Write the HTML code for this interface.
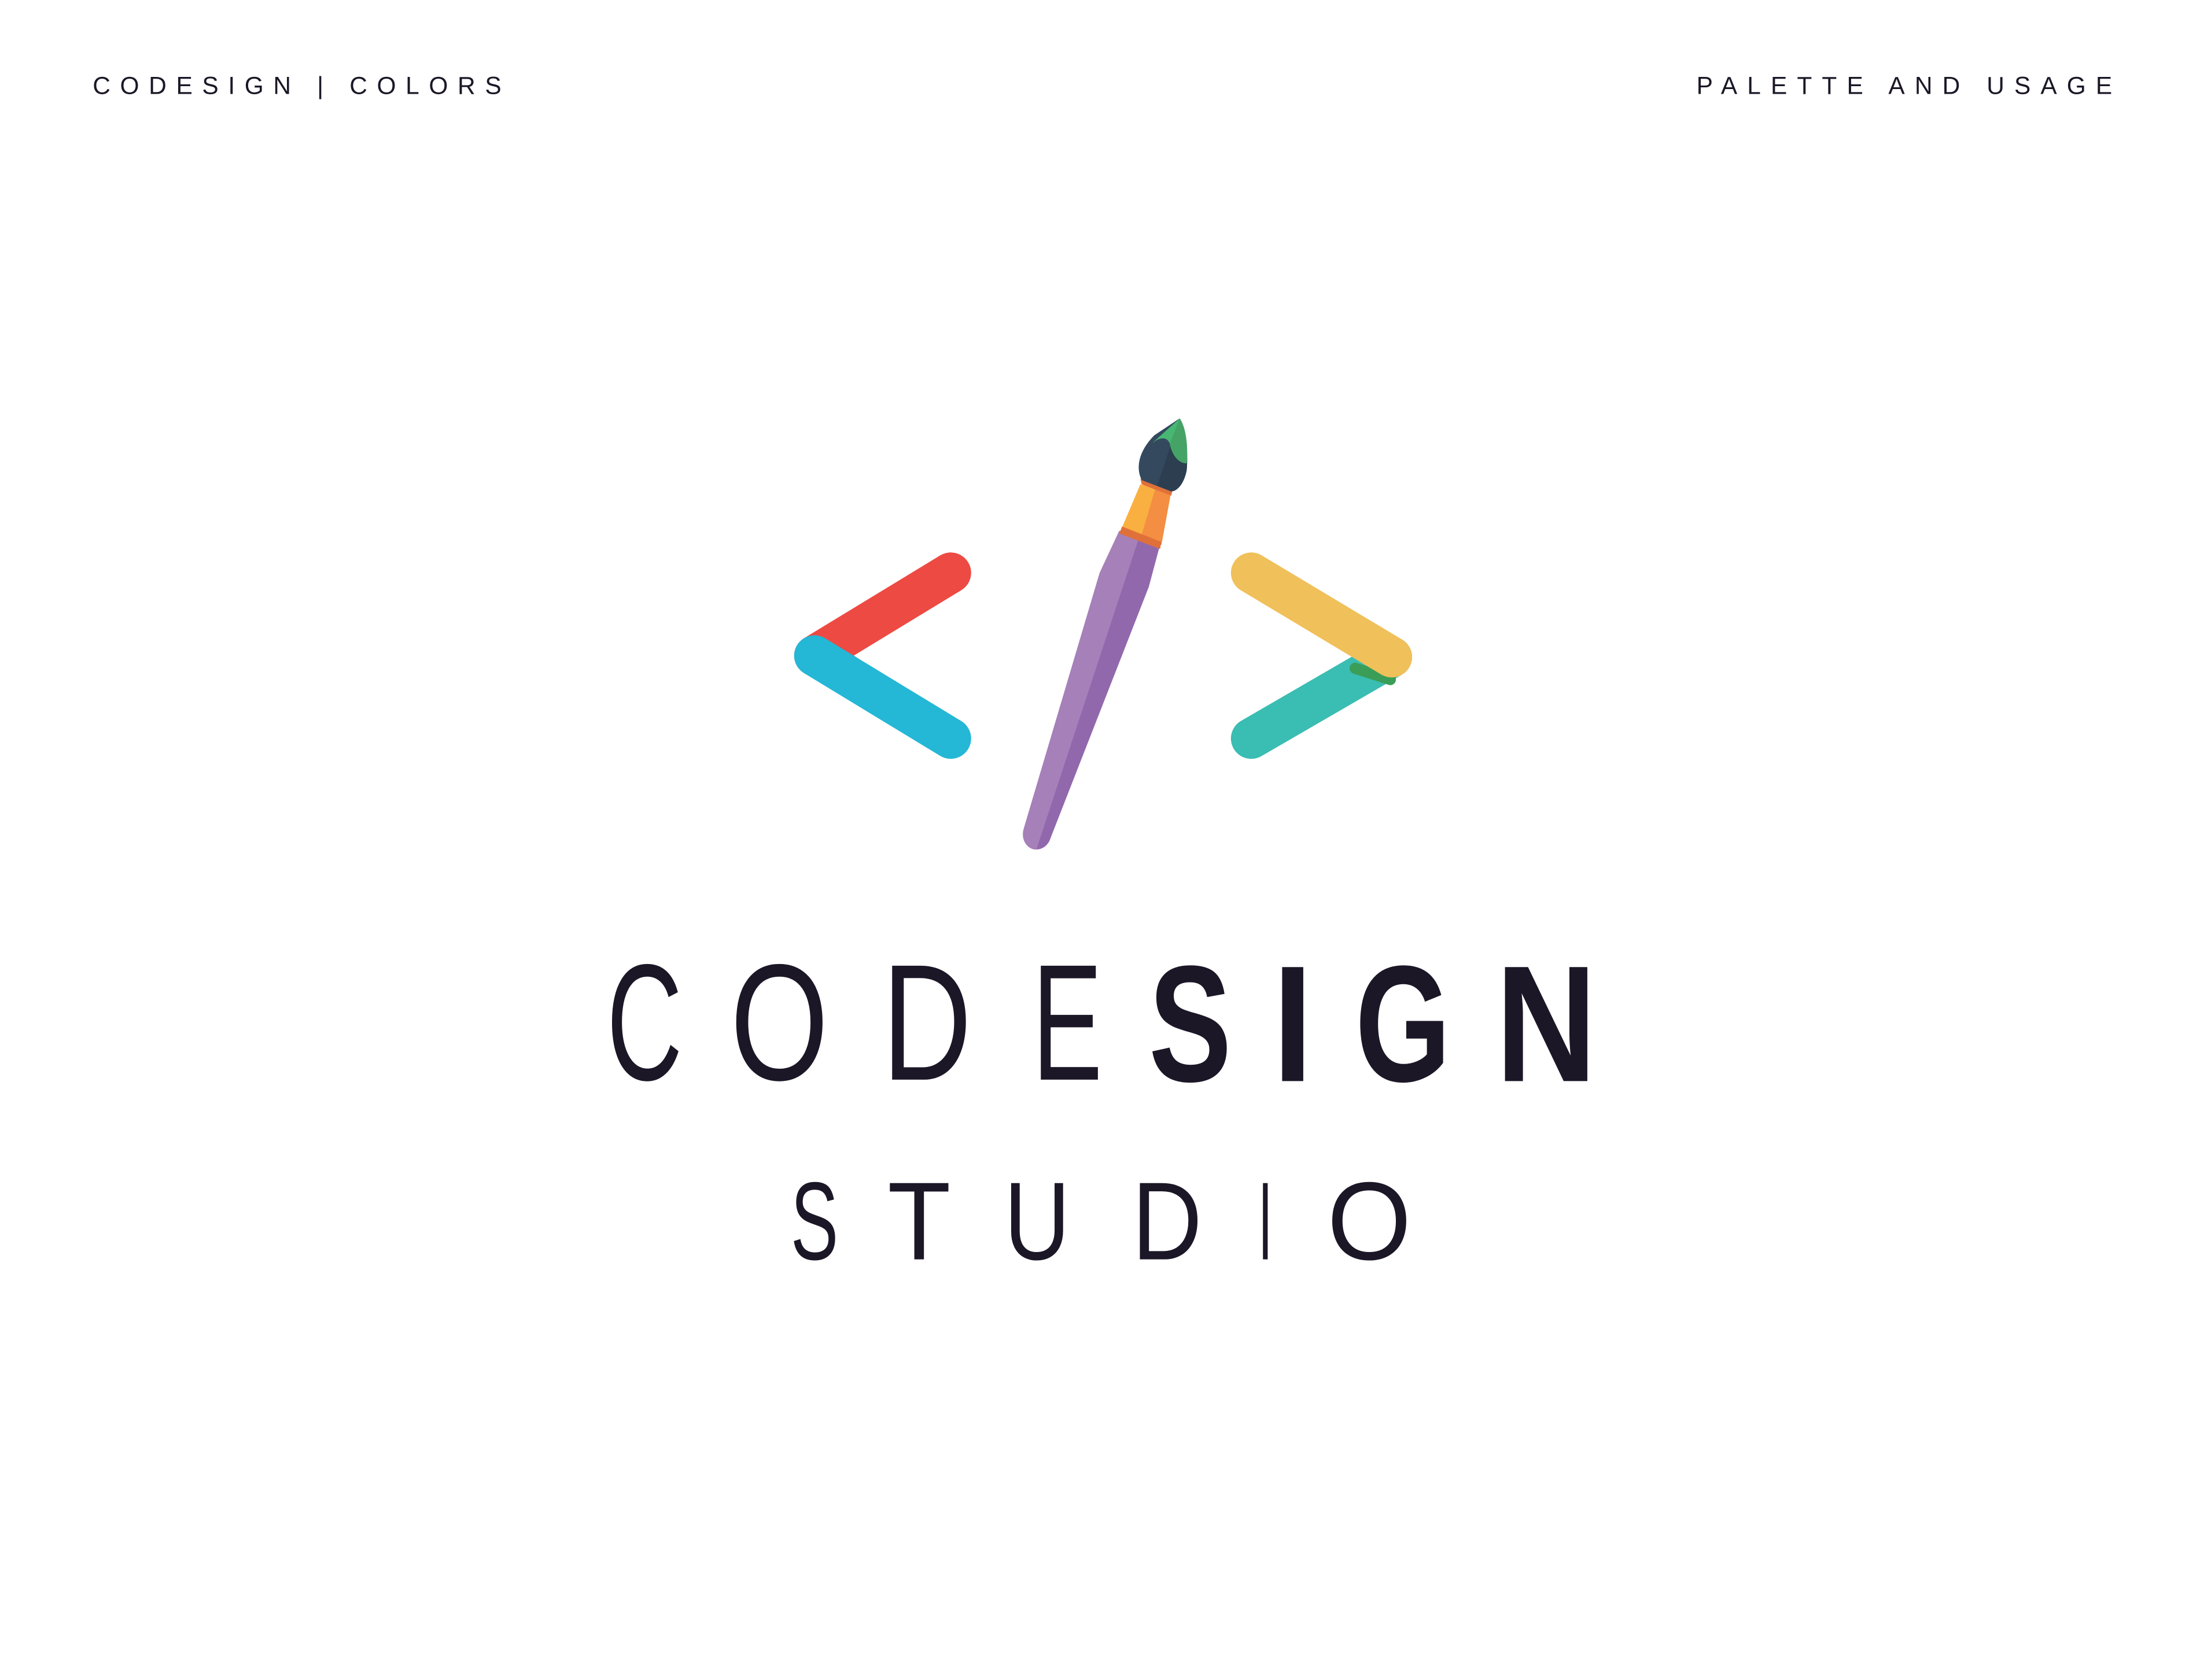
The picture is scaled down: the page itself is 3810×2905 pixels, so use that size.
<!DOCTYPE html>
<html><head><meta charset="utf-8"><style>
html,body{margin:0;padding:0;background:#fff;}
svg{display:block;}
</style></head><body>
<svg width="3810" height="2905" viewBox="0 0 1569.4 1196.6" preserveAspectRatio="none" xmlns="http://www.w3.org/2000/svg">
<rect width="1569.4" height="1196.6" fill="#fff"/>
<g fill="#1c1727" font-family="Liberation Sans, sans-serif">
<text x="66" y="67" font-size="17.5" textLength="291" lengthAdjust="spacing">CODESIGN | COLORS</text>
<text x="1208" y="67" font-size="17.5" textLength="296" lengthAdjust="spacing">PALETTE AND USAGE</text>
</g>
<g stroke-linecap="round" stroke-width="29" fill="none">
<line x1="677" y1="408" x2="580" y2="467" stroke="#ed4a43"/>
<line x1="582" y1="460" x2="606" y2="474" stroke="#d93636" stroke-width="14"/>
<line x1="580" y1="467" x2="677" y2="526" stroke="#24b7d6"/>
<line x1="891" y1="526" x2="991" y2="468" stroke="#3abdb2"/>
<line x1="965" y1="476" x2="990" y2="484" stroke="#3a9e58" stroke-width="8"/>
<line x1="891" y1="408" x2="991" y2="468" stroke="#f0c05a"/>
</g>
<path d="M797,378 L783,408 L729,590 C726,600 734,606 738,605 C744,605 747,600 748,597 L818,418 L826,388 Z" fill="#a680b8"/>
<path d="M811,383 L826,388 L818,418 L748,597 C747,601 743,605 738,605 Z" fill="#9268ad"/>
<path d="M812,345 L798,378 L827,388 L834,350 Z" fill="#f9b041"/>
<path d="M823,347 L812,384 L827,388 L834,350 Z" fill="#f38e42"/>
<path d="M799,375 L827,386 L826,391 L797,380 Z" fill="#e0703a"/>
<path d="M812,341 L835,349 L834,353 L813,345 Z" fill="#e0703a"/>
<path d="M813,342 C808,332 812,320 822,310 L840,298 C845,305 846,325 845,335 C843,345 838,350 834,350 Z" fill="#34495e"/>
<path d="M840,298 C845,305 846,325 845,335 C843,345 838,350 834,350 L824,346 Z" fill="#2c3e50"/>
<path d="M820,316 L840,298 C845,305 846,320 845,330 C838,330 834,322 833,316 C831,311 826,311 820,316 Z" fill="#48b774"/>
<path d="M833,316 L840,298 C845,305 846,320 845,330 C838,330 834,322 833,316 Z" fill="#45a366"/>
<g fill="#1c1727" font-family="Liberation Sans, sans-serif" font-size="118">
<text x="432" y="769" textLength="54" lengthAdjust="spacingAndGlyphs">C</text>
<text x="520" y="769" textLength="70" lengthAdjust="spacingAndGlyphs">O</text>
<text x="628" y="769" textLength="64" lengthAdjust="spacingAndGlyphs">D</text>
<text x="735" y="769" textLength="50" lengthAdjust="spacingAndGlyphs">E</text>
<g font-weight="bold">
<text x="818" y="770" textLength="59" lengthAdjust="spacingAndGlyphs">S</text>
<text x="906" y="770" textLength="29" lengthAdjust="spacingAndGlyphs">I</text>
<text x="965" y="770" textLength="68" lengthAdjust="spacingAndGlyphs">G</text>
<text x="1065" y="770" textLength="72" lengthAdjust="spacingAndGlyphs">N</text>
</g>
</g>
<g fill="#1c1727" font-family="Liberation Sans, sans-serif" font-size="79">
<text x="563" y="897" textLength="34" lengthAdjust="spacingAndGlyphs">S</text>
<text x="632" y="897" textLength="45" lengthAdjust="spacingAndGlyphs">T</text>
<text x="715" y="897" textLength="47" lengthAdjust="spacingAndGlyphs">U</text>
<text x="806" y="897" textLength="50" lengthAdjust="spacingAndGlyphs">D</text>
<text x="896" y="897" textLength="10" lengthAdjust="spacingAndGlyphs">I</text>
<text x="945" y="897" textLength="60" lengthAdjust="spacingAndGlyphs">O</text>
</g>
</svg>
</body></html>
